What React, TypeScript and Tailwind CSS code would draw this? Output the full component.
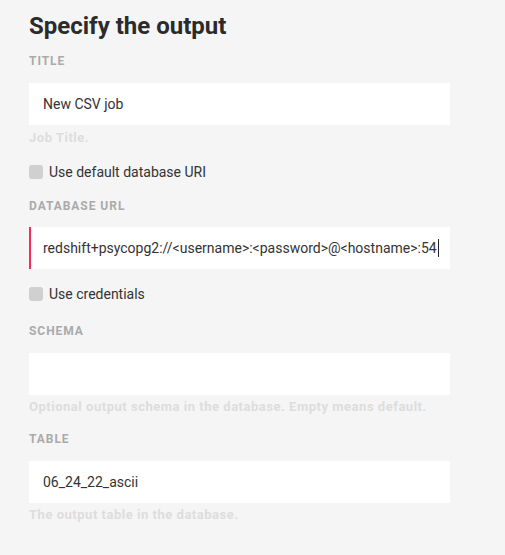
import React from "react";

const font = { fontFamily: "Roboto, 'Liberation Sans', sans-serif" };

function Label({ children, className = "" }: { children: React.ReactNode; className?: string }) {
  return (
    <div className={`text-[12px] leading-[16px] font-bold uppercase tracking-[0.08em] text-[#aaaaaa] ${className}`}>
      {children}
    </div>
  );
}

function Help({ children, className = "" }: { children: React.ReactNode; className?: string }) {
  return (
    <div className={`text-[13px] leading-[16px] font-bold tracking-[0.04em] text-[#dddddd] ${className}`}>
      {children}
    </div>
  );
}

function Input({ value, focused = false, className = "" }: { value: string; focused?: boolean; className?: string }) {
  return (
    <div
      className={`w-[421px] h-[42px] border-l-2 ${focused ? "border-[#fa2a5e]" : "border-transparent"} bg-white flex items-center pl-[12px] text-[14px] text-[#333333] whitespace-nowrap overflow-hidden ${className}`}
    >
      <span>{value}</span>
      {focused && <span className="inline-block w-px h-[18px] bg-[#222222] ml-[1px]" />}
    </div>
  );
}

function Check({ label, className = "" }: { label: string; className?: string }) {
  return (
    <div className={`flex items-center h-5 ${className}`}>
      <div className="w-[14px] h-[14px] rounded-[3px] bg-[#d0d0d0]" />
      <span className="ml-[6px] text-[14px] text-[#333333]">{label}</span>
    </div>
  );
}

export default function App() {
  return (
    <div className="w-[505px] h-[555px] bg-[#f5f5f5] pl-[29px] pt-[12px]" style={font}>
      <h1 className="text-[24px] leading-[28px] font-bold text-[#2b2b2b]">Specify the output</h1>
      <Label className="mt-[13px]">Title</Label>
      <Input value="New CSV job" className="mt-[14px]" />
      <Help className="mt-[5px]">Job Title.</Help>
      <Check label="Use default database URI" className="mt-[16px]" />
      <Label className="mt-[16px]">Database URL</Label>
      <Input
        value="redshift+psycopg2://<username>:<password>@<hostname>:54"
        focused
        className="mt-[13px]"
      />
      <Check label="Use credentials" className="mt-[15px]" />
      <Label className="mt-[19px]">Schema</Label>
      <Input value="" className="mt-[14px]" />
      <Help className="mt-[4px]">Optional output schema in the database. Empty means default.</Help>
      <Label className="mt-[16px]">Table</Label>
      <Input value="06_24_22_ascii" className="mt-[14px]" />
      <Help className="mt-[4px]">The output table in the database.</Help>
    </div>
  );
}
